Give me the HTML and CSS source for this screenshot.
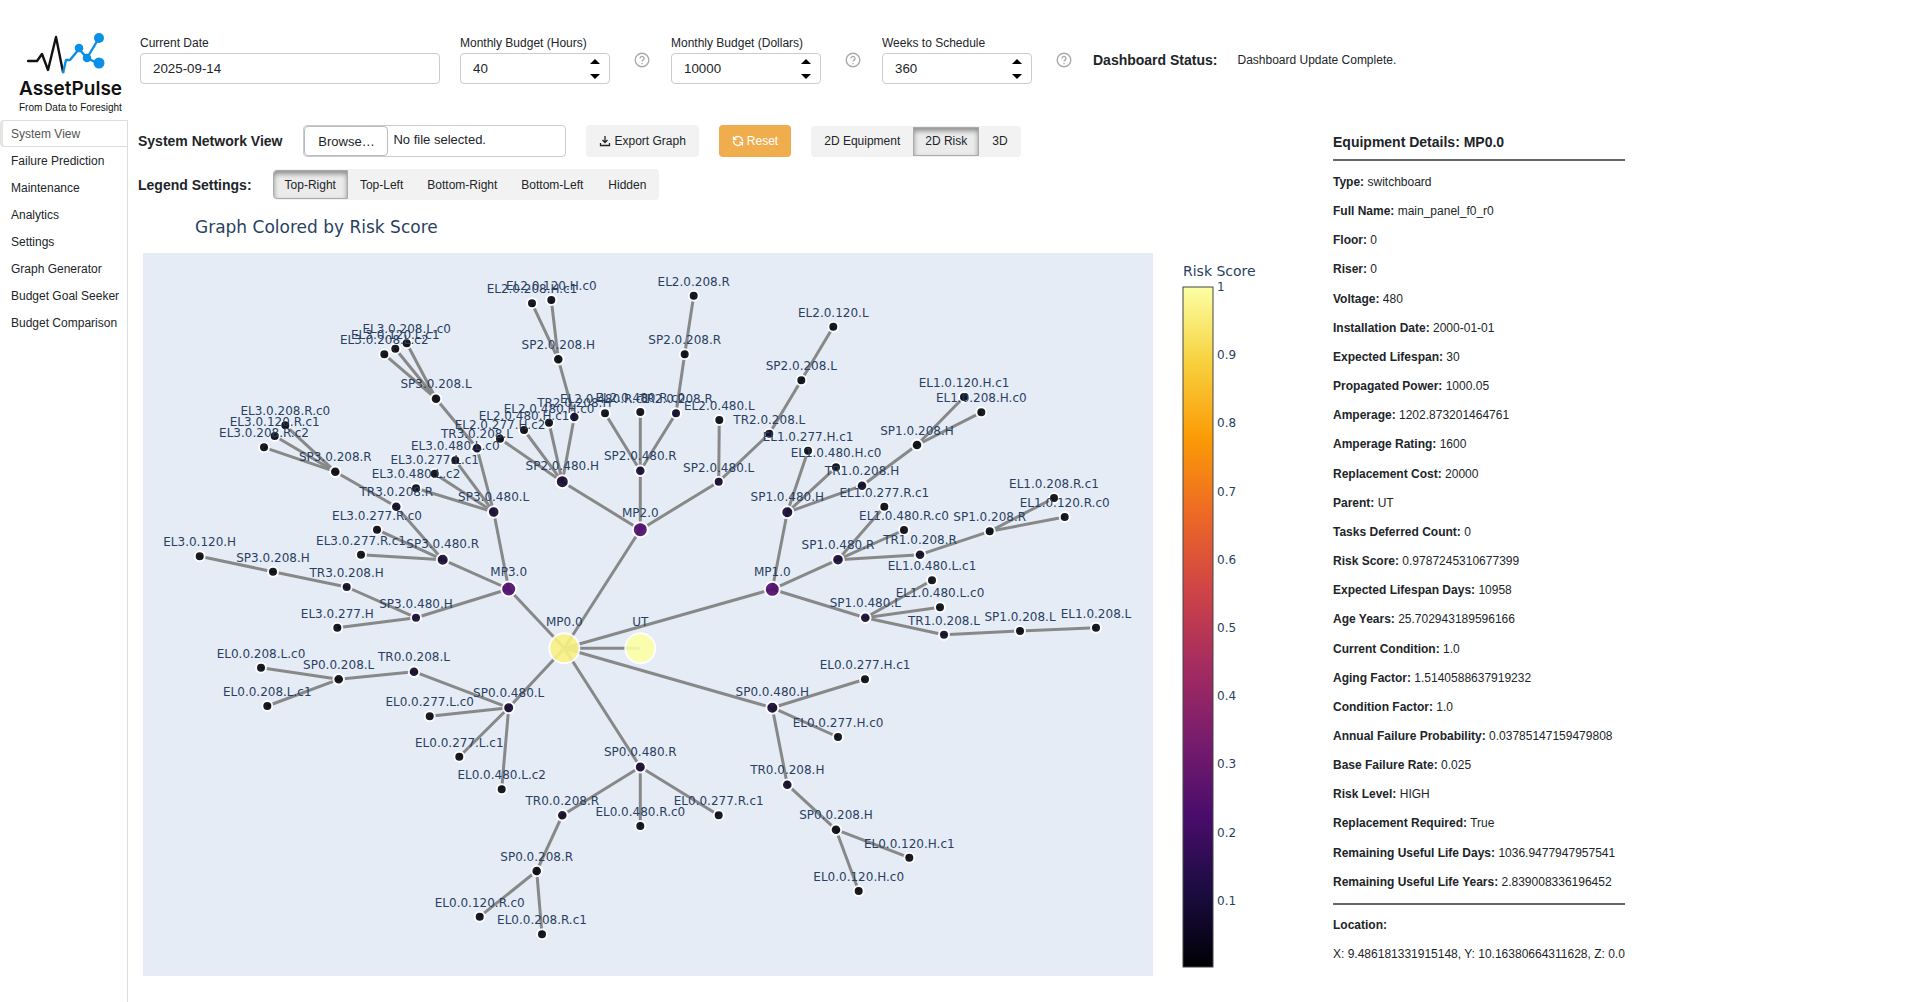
FILE: index.html
```html
<!DOCTYPE html>
<html lang="en">
<head>
    <meta charset="UTF-8">
    <meta name="viewport" content="width=device-width, initial-scale=1.0">
    <title>AssetPulse</title>
    <link rel="stylesheet" href="styles.css">
</head>
<body>

<header class="header">
    <div class="logo">
        <svg class="logo-mark" viewBox="0 0 80 44" width="80" height="44">
            <path d="M1 29h9l5-7 6 16 8-33 7 35" fill="none" stroke="#111" stroke-width="2.4" stroke-linejoin="round" stroke-linecap="round"/>
            <path d="M36 41l3-13h4l9-11 8 9 12 6M60 26L72 6" fill="none" stroke="#0a8fe6" stroke-width="2.4" stroke-linejoin="round"/>
            <g fill="#0a8fe6">
                <circle cx="52" cy="16" r="4.3"/>
                <circle cx="60" cy="26" r="4.3"/>
                <circle cx="72" cy="6" r="5"/>
                <circle cx="72" cy="31" r="5.5"/>
            </g>
        </svg>
        <div class="logo-name">AssetPulse</div>
        <div class="logo-tagline">From Data to Foresight</div>
    </div>

    <div class="controls">
        <div class="field field-date">
            <label for="currentDate">Current Date</label>
            <input type="text" id="currentDate" value="2025-09-14">
        </div>
        <div class="field">
            <label for="budgetHours">Monthly Budget (Hours)</label>
            <div class="spinner">
                <input type="number" id="budgetHours" value="40">
                <button class="spin-up" aria-label="Increase hours"></button>
                <button class="spin-down" aria-label="Decrease hours"></button>
            </div>
        </div>
        <svg class="help" viewBox="0 0 16 16"><circle cx="8" cy="8" r="6.8"/><path d="M6 6.4a2 2 0 1 1 3 1.7c-.7.4-1 .7-1 1.4M8 11v1.2"/></svg>
        <div class="field">
            <label for="budgetDollars">Monthly Budget (Dollars)</label>
            <div class="spinner">
                <input type="number" id="budgetDollars" value="10000">
                <button class="spin-up" aria-label="Increase dollars"></button>
                <button class="spin-down" aria-label="Decrease dollars"></button>
            </div>
        </div>
        <svg class="help" viewBox="0 0 16 16"><circle cx="8" cy="8" r="6.8"/><path d="M6 6.4a2 2 0 1 1 3 1.7c-.7.4-1 .7-1 1.4M8 11v1.2"/></svg>
        <div class="field">
            <label for="weeks">Weeks to Schedule</label>
            <div class="spinner">
                <input type="number" id="weeks" value="360">
                <button class="spin-up" aria-label="Increase weeks"></button>
                <button class="spin-down" aria-label="Decrease weeks"></button>
            </div>
        </div>
        <svg class="help" viewBox="0 0 16 16"><circle cx="8" cy="8" r="6.8"/><path d="M6 6.4a2 2 0 1 1 3 1.7c-.7.4-1 .7-1 1.4M8 11v1.2"/></svg>
        <div class="status">
            <strong>Dashboard Status:</strong>
            <span>Dashboard Update Complete.</span>
        </div>
    </div>
</header>

<div class="main">
    <nav class="tabs">
        <a href="#" class="active">System View</a>
        <a href="#">Failure Prediction</a>
        <a href="#">Maintenance</a>
        <a href="#">Analytics</a>
        <a href="#">Settings</a>
        <a href="#">Graph Generator</a>
        <a href="#">Budget Goal Seeker</a>
        <a href="#">Budget Comparison</a>
    </nav>

    <section class="network">
        <div class="toolbar">
            <h2>System Network View</h2>
            <label class="file">
                <input type="file">
                <span class="file-button">Browse…</span>
                <span class="file-name">No file selected.</span>
            </label>
            <button class="btn btn-export">
                <svg class="btn-icon" viewBox="0 0 12 12"><path d="M6 1v6.500M3.500 5L6 7.500 8.500 5M1.500 8v2.500h9V8"/></svg>
                Export Graph
            </button>
            <button class="btn btn-reset">
                <svg class="btn-icon" viewBox="0 0 12 12"><path d="M1.500 1.500v3h3M2 4a4.500 4.500 0 0 1 8.500 2M10.500 10.500v-3h-3M10 8a4.500 4.500 0 0 1-8.500-2"/></svg>
                Reset
            </button>
            <div class="btn-group">
                <button>2D Equipment</button>
                <button class="active">2D Risk</button>
                <button>3D</button>
            </div>
        </div>
        <div class="toolbar legend">
            <h2>Legend Settings:</h2>
            <div class="btn-group">
                <button class="active">Top-Right</button>
                <button>Top-Left</button>
                <button>Bottom-Right</button>
                <button>Bottom-Left</button>
                <button>Hidden</button>
            </div>
        </div>
        <svg class="graph" id="graph" viewBox="138 207 1195 775"></svg>
    </section>

    <aside class="details">
        <div class="details-body">
            <h2>Equipment Details: MP0.0</h2>
            <hr>
            <p><strong>Type:</strong> switchboard</p>
            <p><strong>Full Name:</strong> main_panel_f0_r0</p>
            <p><strong>Floor:</strong> 0</p>
            <p><strong>Riser:</strong> 0</p>
            <p><strong>Voltage:</strong> 480</p>
            <p><strong>Installation Date:</strong> 2000-01-01</p>
            <p><strong>Expected Lifespan:</strong> 30</p>
            <p><strong>Propagated Power:</strong> 1000.05</p>
            <p><strong>Amperage:</strong> 1202.873201464761</p>
            <p><strong>Amperage Rating:</strong> 1600</p>
            <p><strong>Replacement Cost:</strong> 20000</p>
            <p><strong>Parent:</strong> UT</p>
            <p><strong>Tasks Deferred Count:</strong> 0</p>
            <p><strong>Risk Score:</strong> 0.9787245310677399</p>
            <p><strong>Expected Lifespan Days:</strong> 10958</p>
            <p><strong>Age Years:</strong> 25.702943189596166</p>
            <p><strong>Current Condition:</strong> 1.0</p>
            <p><strong>Aging Factor:</strong> 1.5140588637919232</p>
            <p><strong>Condition Factor:</strong> 1.0</p>
            <p><strong>Annual Failure Probability:</strong> 0.03785147159479808</p>
            <p><strong>Base Failure Rate:</strong> 0.025</p>
            <p><strong>Risk Level:</strong> HIGH</p>
            <p><strong>Replacement Required:</strong> True</p>
            <p><strong>Remaining Useful Life Days:</strong> 1036.9477947957541</p>
            <p><strong>Remaining Useful Life Years:</strong> 2.839008336196452</p>
            <hr>
            <p><strong>Location:</strong></p>
            <p>X: 9.486181331915148, Y: 10.16380664311628, Z: 0.0</p>
        </div>
    </aside>
</div>

<script src="graph.js"></script>

</body>
</html>
```
FILE: styles.css
```css
* {
    box-sizing: border-box;
}
body {
    margin: 0;
    min-height: 100vh;
    display: flex;
    flex-direction: column;
    font-family: "Liberation Sans", Arial, sans-serif;
    font-size: 12px;
    line-height: 17px;
    color: #212529;
    background: #fff;
}
button, input {
    font-family: inherit;
    color: inherit;
}
h2 {
    margin: 0;
    font-size: 14px;
    line-height: 20px;
    white-space: nowrap;
}

/* Header */
.header {
    display: flex;
    height: 120px;
}
.logo {
    width: 140px;
    padding: 32px 0 0 19px;
    color: #111;
    white-space: nowrap;
}
.logo-mark {
    display: block;
    margin-left: 8px;
}
.logo-name {
    font-family: Inter, sans-serif;
    font-size: 19px;
    font-weight: 600;
    line-height: 26px;
}
.logo-tagline {
    font-size: 10px;
    line-height: 12px;
}
.controls {
    display: flex;
    padding-top: 35px;
}
.field {
    width: 150px;
}
.field-date {
    width: 300px;
    margin-right: 20px;
}
.field label {
    display: block;
    height: 18px;
    white-space: nowrap;
}
.field input {
    width: 100%;
    height: 31px;
    padding: 0 12px;
    border: 1px solid #ccc;
    border-radius: 4px;
    background: #fff;
}
.field input[type=number] {
    appearance: textfield;
    -moz-appearance: textfield;
}
.field input::-webkit-inner-spin-button {
    display: none;
}
.spinner {
    position: relative;
}
.spinner button {
    position: absolute;
    right: 10px;
    width: 10px;
    height: 5px;
    padding: 0;
    border: 0;
    background: #000;
}
.spin-up {
    top: 6px;
    clip-path: polygon(50% 0, 100% 100%, 0 100%);
}
.spin-down {
    bottom: 5px;
    clip-path: polygon(0 0, 100% 0, 50% 100%);
}
.help {
    width: 16px;
    height: 16px;
    margin: 17px 21px 0 24px;
    fill: none;
    stroke: #aaa;
    stroke-width: 1.4;
}
.status {
    display: flex;
    gap: 20px;
    padding-top: 15px;
    line-height: 20px;
    white-space: nowrap;
}
.status strong {
    font-size: 14px;
}

/* Sidebar */
.main {
    flex: 1;
    display: grid;
    grid-template-columns: 128px minmax(0, 1fr) 587px;
}
.tabs {
    border-right: 1px solid #ddd;
}
.tabs a {
    display: block;
    height: 27px;
    padding-left: 11px;
    line-height: 28px;
    color: inherit;
    text-decoration: none;
}
.tabs .active {
    padding-left: 8px;
    border: 1px solid #ddd;
    border-left: 3px solid #e4e4e4;
    border-right: 0;
    border-radius: 4px 0 0 4px;
    line-height: 26px;
    color: #555;
}

/* Network view */
.network {
    padding-left: 10px;
}
.toolbar {
    display: flex;
    align-items: center;
    height: 42px;
}
.file {
    display: flex;
    width: 263px;
    height: 32px;
    margin: 0 20px 0 21px;
    border: 1px solid #ccc;
    border-radius: 4px;
    font-size: 13px;
    line-height: 28px;
}
.file input {
    position: absolute;
    width: 1px;
    height: 1px;
    opacity: 0;
}
.file-button {
    width: 84px;
    height: 30px;
    border: 1px solid #bbb;
    border-radius: 4px;
    line-height: 30px;
    text-align: center;
}
.file-name {
    padding-left: 5px;
}
.btn {
    display: flex;
    align-items: center;
    height: 32px;
    margin-right: 20px;
    padding: 0 13px;
    border: 0;
    border-radius: 4px;
    background: #f2f2f2;
    font-size: 12px;
    white-space: nowrap;
}
.btn-icon {
    width: 12px;
    height: 12px;
    margin-right: 3px;
    fill: none;
    stroke: currentColor;
    stroke-width: 1.3;
}
.btn-reset {
    background: #f0ad4e;
    color: #fff;
}
.btn-group {
    display: flex;
    height: 31px;
    border-radius: 4px;
    background: #f2f2f2;
}
.btn-group button {
    padding: 0 12px;
    border: 0;
    background: none;
    font-size: 12px;
    white-space: nowrap;
}
.btn-group button:first-child,
.btn-group button:last-child {
    padding: 0 13px;
}
.btn-group .active,
.btn-group .active:first-child {
    margin: 1px 0;
    padding: 0 11px;
    border: 1px solid #aaa;
    background: #ebebeb;
    box-shadow: inset 0 3px 5px rgba(0, 0, 0, 0.4);
}
.btn-group .active:first-child {
    border-radius: 4px 0 0 4px;
}
.legend {
    gap: 21px;
    height: 45px;
}

/* Graph */
.graph {
    display: block;
    width: 100%;
    font-family: Verdana, "DejaVu Sans", sans-serif;
    font-size: 12px;
    fill: #2a3f5f;
}
.graph .title {
    font-size: 17px;
}
.graph .scale-title {
    font-size: 14px;
}
.graph .plot-bg {
    fill: #e5ecf6;
}
.graph .edge {
    stroke: #888;
    stroke-width: 3;
}
.graph .node {
    stroke: #fff;
    stroke-width: 2;
    opacity: 0.9;
}
.graph .node-label {
    text-anchor: middle;
}
.graph .scale {
    fill: url(#inferno);
    stroke: #444;
}

/* Equipment details */
.details {
    padding-top: 12px;
}
.details-body {
    width: fit-content;
    white-space: nowrap;
}
.details p {
    margin: 0 0 12px;
    line-height: 1.43;
}
.details hr {
    margin: 7px 0 13px;
    border: 0;
    border-top: 2px solid #666;
}
.details p + hr {
    margin: 12px 0;
}
```
FILE: graph.js
```js
// name, parent, x, y, radius
const nodes = [
    ['UT', null, 640.3, 648.3, 14],
    ['MP0.0', 'UT', 564.3, 648.3, 14],
    ['MP1.0', 'MP0.0', 772.3, 589.3, 6.5],
    ['MP2.0', 'MP0.0', 640.3, 529.7, 6.5],
    ['MP3.0', 'MP0.0', 508.7, 589, 6.5],

    ['SP0.0.480.H', 'MP0.0', 772.3, 707.7, 5],
    ['SP0.0.480.R', 'MP0.0', 640.3, 767, 4.5],
    ['SP0.0.480.L', 'MP0.0', 508.7, 707.7, 4.5],
    ['TR0.0.208.H', 'SP0.0.480.H', 787.3, 784.7, 4.3],
    ['EL0.0.277.H.c0', 'SP0.0.480.H', 838, 737, 4],
    ['EL0.0.277.H.c1', 'SP0.0.480.H', 865, 679.3, 4],
    ['SP0.0.208.H', 'TR0.0.208.H', 836, 829.7, 4.3],
    ['EL0.0.120.H.c0', 'SP0.0.208.H', 858.7, 891, 4],
    ['EL0.0.120.H.c1', 'SP0.0.208.H', 909.3, 857.7, 4],
    ['TR0.0.208.R', 'SP0.0.480.R', 562.3, 815.3, 4.3],
    ['EL0.0.480.R.c0', 'SP0.0.480.R', 640.3, 826, 4],
    ['EL0.0.277.R.c1', 'SP0.0.480.R', 718.7, 815.3, 4],
    ['SP0.0.208.R', 'TR0.0.208.R', 536.7, 871, 4.3],
    ['EL0.0.120.R.c0', 'SP0.0.208.R', 479.7, 916.7, 4],
    ['EL0.0.208.R.c1', 'SP0.0.208.R', 542, 934.3, 4],
    ['TR0.0.208.L', 'SP0.0.480.L', 414, 671.7, 4.3],
    ['EL0.0.277.L.c0', 'SP0.0.480.L', 429.7, 716.3, 4],
    ['EL0.0.277.L.c1', 'SP0.0.480.L', 459.3, 756.7, 4],
    ['EL0.0.480.L.c2', 'SP0.0.480.L', 501.7, 789.3, 4],
    ['SP0.0.208.L', 'TR0.0.208.L', 338.7, 679.3, 4.3],
    ['EL0.0.208.L.c0', 'SP0.0.208.L', 261, 667.7, 4],
    ['EL0.0.208.L.c1', 'SP0.0.208.L', 267.3, 706, 4],

    ['SP1.0.480.H', 'MP1.0', 787.3, 512.3, 5],
    ['SP1.0.480.R', 'MP1.0', 838, 559.7, 4.8],
    ['SP1.0.480.L', 'MP1.0', 865.3, 617.7, 4.3],
    ['TR1.0.208.H', 'SP1.0.480.H', 862, 485.7, 4.3],
    ['EL1.0.480.H.c0', 'SP1.0.480.H', 836, 467.3, 4],
    ['EL1.0.277.H.c1', 'SP1.0.480.H', 808, 450.7, 4],
    ['SP1.0.208.H', 'TR1.0.208.H', 917, 445, 4.3],
    ['EL1.0.208.H.c0', 'SP1.0.208.H', 981.3, 412.3, 4],
    ['EL1.0.120.H.c1', 'SP1.0.208.H', 964, 397, 4],
    ['TR1.0.208.R', 'SP1.0.480.R', 920, 554.7, 4.3],
    ['EL1.0.480.R.c0', 'SP1.0.480.R', 904, 530, 4],
    ['EL1.0.277.R.c1', 'SP1.0.480.R', 884.3, 506.7, 4],
    ['SP1.0.208.R', 'TR1.0.208.R', 989.7, 531.3, 4],
    ['EL1.0.120.R.c0', 'SP1.0.208.R', 1064.7, 517, 4],
    ['EL1.0.208.R.c1', 'SP1.0.208.R', 1054, 498, 4],
    ['TR1.0.208.L', 'SP1.0.480.L', 944, 634.7, 4],
    ['EL1.0.480.L.c0', 'SP1.0.480.L', 940, 607.3, 4],
    ['EL1.0.480.L.c1', 'SP1.0.480.L', 932, 580.3, 4],
    ['SP1.0.208.L', 'TR1.0.208.L', 1020, 631, 4],
    ['EL1.0.208.L', 'SP1.0.208.L', 1096, 627.7, 4],

    ['SP2.0.480.H', 'MP2.0', 562.3, 481.7, 5.5],
    ['SP2.0.480.R', 'MP2.0', 640.3, 470.7, 4.3],
    ['SP2.0.480.L', 'MP2.0', 718.7, 481.7, 4],
    ['TR2.0.208.H', 'SP2.0.480.H', 574.3, 417, 4.3],
    ['EL2.0.480.H.c0', 'SP2.0.480.H', 549, 422.7, 4],
    ['EL2.0.480.H.c1', 'SP2.0.480.H', 524, 430, 4],
    ['EL2.0.277.H.c2', 'SP2.0.480.H', 500, 438.7, 4],
    ['SP2.0.208.H', 'TR2.0.208.H', 558.3, 359.3, 4.3],
    ['EL2.0.120.H.c0', 'SP2.0.208.H', 551.3, 300, 4],
    ['EL2.0.208.H.c1', 'SP2.0.208.H', 532, 303.3, 4],
    ['TR2.0.208.R', 'SP2.0.480.R', 676, 413.3, 4],
    ['EL2.0.480.R.c0', 'SP2.0.480.R', 640.3, 412, 4],
    ['EL2.0.480.R.c1', 'SP2.0.480.R', 605, 413.3, 4],
    ['SP2.0.208.R', 'TR2.0.208.R', 684.7, 354.3, 4],
    ['EL2.0.208.R', 'SP2.0.208.R', 693.7, 295.7, 4],
    ['TR2.0.208.L', 'SP2.0.480.L', 769.3, 433.7, 4],
    ['EL2.0.480.L', 'SP2.0.480.L', 719.3, 420, 4],
    ['SP2.0.208.L', 'TR2.0.208.L', 801.3, 380.3, 4],
    ['EL2.0.120.L', 'SP2.0.208.L', 833.3, 326.7, 4],

    ['SP3.0.480.H', 'MP3.0', 416, 617.7, 4],
    ['SP3.0.480.R', 'MP3.0', 442.7, 559.7, 5],
    ['SP3.0.480.L', 'MP3.0', 493.7, 512, 4.8],
    ['TR3.0.208.H', 'SP3.0.480.H', 346.7, 587, 4],
    ['EL3.0.277.H', 'SP3.0.480.H', 337.3, 627.7, 4],
    ['SP3.0.208.H', 'TR3.0.208.H', 273, 571.7, 4],
    ['EL3.0.120.H', 'SP3.0.208.H', 199.7, 556.3, 4],
    ['TR3.0.208.R', 'SP3.0.480.R', 396.3, 506.7, 4.3],
    ['EL3.0.277.R.c0', 'SP3.0.480.R', 377, 529.7, 4],
    ['EL3.0.277.R.c1', 'SP3.0.480.R', 361, 554.7, 4],
    ['SP3.0.208.R', 'TR3.0.208.R', 335.3, 471.7, 4.3],
    ['EL3.0.208.R.c0', 'SP3.0.208.R', 285.3, 425.3, 4],
    ['EL3.0.120.R.c1', 'SP3.0.208.R', 274.7, 436, 4],
    ['EL3.0.208.R.c2', 'SP3.0.208.R', 264, 447.3, 4],
    ['TR3.0.208.L', 'SP3.0.480.L', 477, 448.3, 4.3],
    ['EL3.0.480.L.c0', 'SP3.0.480.L', 455.3, 460.3, 4],
    ['EL3.0.277.L.c1', 'SP3.0.480.L', 434.7, 473.7, 4],
    ['EL3.0.480.L.c2', 'SP3.0.480.L', 416, 488.3, 4],
    ['SP3.0.208.L', 'TR3.0.208.L', 436, 398.7, 4.3],
    ['EL3.0.208.L.c0', 'SP3.0.208.L', 406.7, 343.3, 4],
    ['EL3.0.120.L.c1', 'SP3.0.208.L', 395.3, 348.7, 4],
    ['EL3.0.208.L.c2', 'SP3.0.208.L', 384.3, 354.3, 4]
];

const inferno = ['#000004', '#1b0c41', '#4a0c6b', '#781c6d', '#a52c60', '#cf4446', '#ed6925', '#fb9b06', '#f7d13d', '#fcffa4'];

function nodeColor(name, r) {
    if (name === 'MP0.0') return '#fbf284';
    if (r > 10) return '#fcffa4';
    if (r > 6) return '#4f0b6c';
    if (name.includes('480') && name.startsWith('SP')) return '#120830';
    if (name.startsWith('TR')) return '#0c0724';
    return '#05050c';
}

function drawGraph() {
    const byName = {};
    nodes.forEach(n => byName[n[0]] = n);

    let svg = '<defs><linearGradient id="inferno" x1="0" y1="1" x2="0" y2="0">';
    inferno.forEach((color, i) => {
        svg += `<stop offset="${i / (inferno.length - 1)}" stop-color="${color}"/>`;
    });
    svg += '</linearGradient></defs>';
    svg += '<text class="title" x="195" y="233">Graph Colored by Risk Score</text>';
    svg += '<rect class="plot-bg" x="143" y="253" width="1010" height="723"/>';

    nodes.forEach(([name, parent, x, y]) => {
        if (!parent) return;
        const p = byName[parent];
        svg += `<line class="edge" x1="${p[2]}" y1="${p[3]}" x2="${x}" y2="${y}"/>`;
    });
    nodes.forEach(([name, parent, x, y, r]) => {
        svg += `<circle class="node" cx="${x}" cy="${y}" r="${r + 1}" fill="${nodeColor(name, r)}"/>`;
    });
    // bigger markers push their label further up
    nodes.forEach(([name, parent, x, y, r]) => {
        svg += `<text class="node-label" x="${x}" y="${y - r / 0.8 - 5}">${name}</text>`;
    });

    // Colour scale
    svg += '<text class="scale-title" x="1183" y="276">Risk Score</text>';
    svg += '<rect class="scale" x="1183" y="287" width="30" height="680"/>';
    for (let i = 1; i <= 10; i++) {
        svg += `<text x="1217" y="${973 - i * 68.2}">${i / 10}</text>`;
    }
    document.getElementById('graph').innerHTML = svg;
}

drawGraph();
```
